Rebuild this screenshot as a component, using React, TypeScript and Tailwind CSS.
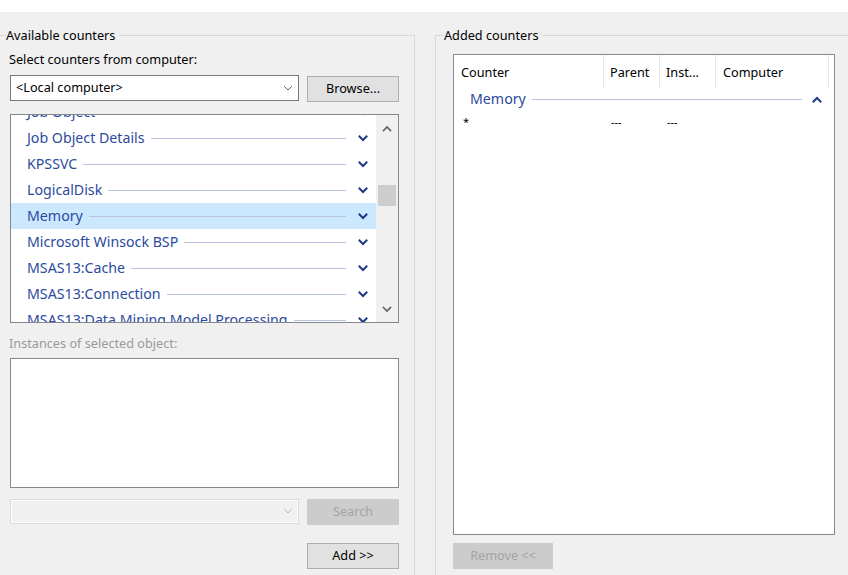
import React from 'react';

const Chevron = ({ up = false, className = '', color = '#1c3a86', width = 2 }: { up?: boolean; className?: string; color?: string; width?: number }) => (
  <svg width="10" height="7" viewBox="0 0 10 7" className={className}>
    <polyline
      points={up ? '1.5,5.5 5,2 8.5,5.5' : '1.5,1.5 5,5 8.5,1.5'}
      fill="none"
      stroke={color}
      strokeWidth={width}
      strokeLinecap="square"
    />
  </svg>
);

const COUNTERS = [
  'Job Object',
  'Job Object Details',
  'KPSSVC',
  'LogicalDisk',
  'Memory',
  'Microsoft Winsock BSP',
  'MSAS13:Cache',
  'MSAS13:Connection',
  'MSAS13:Data Mining Model Processing',
];

const Button = ({ children, disabled = false, className = '' }: { children: React.ReactNode; disabled?: boolean; className?: string }) => (
  <button
    type="button"
    className={
      'h-[26px] border text-[12.7px] flex items-center justify-center ' +
      (disabled ? 'bg-[#cccccc] border-[#cccccc] text-[#a3a3a3] ' : 'bg-[#e1e1e1] border-[#adadad] text-black ') +
      className
    }
  >
    {children}
  </button>
);

const CounterRow = ({ name, selected }: { name: string; selected: boolean }) => (
  <div className={'h-[26px] flex items-center pl-[16px] pr-[8px] ' + (selected ? 'bg-[#cce8ff]' : '')}>
    <span className="text-[14.2px] text-[#2b4a9d] whitespace-nowrap leading-none">{name}</span>
    <div className="flex-1 h-px bg-[#b9c3dd] ml-[6px] mr-[12px]" />
    <Chevron />
  </div>
);

export default function App() {
  return (
    <div className="w-[848px] h-[575px] bg-[#f0f0f0] font-['Noto_Sans',sans-serif] text-[12.7px] text-black overflow-hidden">
      <div className="h-3 bg-white" />
      <div className="flex pt-[15px]">
        {/* Available counters */}
        <fieldset className="w-[415px] h-[600px] border-t border-r border-[#d9d9d9] pl-[6px] pr-[15px] min-w-0">
          <legend className="pr-[4px] leading-[17px]">Available counters</legend>
          <div className="pl-[3px] -mt-[2px]">
            <div className="leading-[16px] mt-[9px]">Select counters from computer:</div>
            <div className="flex items-start mt-[8px]">
              <div className="w-[289px] h-[26px] bg-white border border-[#7a7a7a] flex items-center pl-[5px] pr-[5px] ml-px">
                <span className="flex-1">&lt;Local computer&gt;</span>
                <Chevron color="#606060" width={1} />
              </div>
              <Button className="w-[92px] ml-[8px] mt-px">Browse...</Button>
            </div>
            <div className="ml-px mt-[12px] w-[389px] h-[209px] bg-white border border-[#828790] flex overflow-hidden">
              <div className="flex-1 overflow-hidden">
                <div className="-mt-[16px]">
                  {COUNTERS.map((c) => (
                    <CounterRow key={c} name={c} selected={c === 'Memory'} />
                  ))}
                </div>
              </div>
              <div className="w-[22px] bg-[#f0f0f0] flex flex-col items-center">
                <div className="h-[26px] flex items-center">
                  <Chevron up color="#606060" width={1.6} />
                </div>
                <div className="w-[18px] h-[21px] bg-[#cdcdcd] mt-[44px]" />
                <div className="flex-1" />
                <div className="h-[26px] flex items-center">
                  <Chevron color="#606060" width={1.6} />
                </div>
              </div>
            </div>
            <div className="leading-[16px] mt-[12px] text-[#9a9a9a]">Instances of selected object:</div>
            <div className="ml-px mt-[7px] w-[389px] h-[130px] bg-white border border-[#828790]" />
            <div className="flex items-start mt-[11px]">
              <div className="w-[289px] h-[25px] bg-[#f0f0f0] border border-[#dadada] ml-px flex items-center pr-[5px] shadow-[inset_0_0_0_1px_#ffffff]">
                <div className="flex-1" />
                <Chevron color="#b8b8b8" width={1} />
              </div>
              <Button disabled className="w-[92px] ml-[8px]">Search</Button>
            </div>
            <div className="flex justify-end mt-[18px] w-[390px]">
              <Button className="w-[92px]">Add &gt;&gt;</Button>
            </div>
          </div>
        </fieldset>

        <div className="w-[20px]" />

        {/* Added counters */}
        <fieldset className="flex-1 h-[600px] border-t border-l border-[#d9d9d9] pl-[8px] min-w-0">
          <legend className="pr-[4px] leading-[17px]">Added counters</legend>
          <div className="pl-[9px] mt-[10px]">
            <div className="w-[382px] h-[481px] bg-white border border-[#828790]">
              <div className="flex h-[33px] items-start">
                <div className="w-[150px] pl-[7px] pt-[8px] h-full border-r border-[#e5e5e5]">Counter</div>
                <div className="w-[56px] pl-[6px] pt-[8px] h-full border-r border-[#e5e5e5]">Parent</div>
                <div className="w-[56px] pl-[6px] pt-[8px] h-full border-r border-[#e5e5e5]">Inst...</div>
                <div className="w-[113px] pl-[7px] pt-[8px] h-full border-r border-[#e5e5e5]">Computer</div>
              </div>
              <div className="h-[22px] flex items-center pl-[16px] pr-[12px]">
                <span className="text-[14.2px] text-[#2b4a9d] leading-none">Memory</span>
                <div className="flex-1 h-px bg-[#b9c3dd] ml-[6px] mr-[10px]" />
                <Chevron up />
              </div>
              <div className="h-[24px] flex items-center text-[11px]">
                <div className="w-[150px] pl-[9px]">*</div>
                <div className="w-[56px] pl-[7px]">---</div>
                <div className="w-[56px] pl-[7px]">---</div>
              </div>
            </div>
            <Button disabled className="w-[100px] mt-[8px]">Remove &lt;&lt;</Button>
          </div>
        </fieldset>
      </div>
    </div>
  );
}
